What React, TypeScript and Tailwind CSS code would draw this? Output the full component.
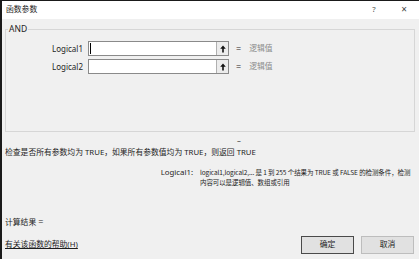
import React from "react";

const FONT = { fontFamily: '"Noto Sans", "Noto Sans CJK SC", sans-serif' };
const CJK = { fontFamily: '"Noto Sans CJK SC", "Noto Sans", sans-serif' };

function UpArrow() {
  return (
    <svg width="6" height="8" viewBox="0 0 6 8">
      <path d="M3 0.5 L5.8 3.8 L3.8 3.8 L3.8 7.5 L2.2 7.5 L2.2 3.8 L0.2 3.8 Z" fill="#111" />
    </svg>
  );
}

function ArgRow({ label, caret }: { label: string; caret?: boolean }) {
  return (
    <div className="flex h-[15px] items-center">
      <div className="w-[77px] shrink-0 text-right text-[8px] leading-[15px]">{label}</div>
      <div className="ml-[5px] flex h-[15px] w-[141px] shrink-0 border border-[#8a8a8a] bg-white">
        <div className="flex flex-1 items-center">
          {caret && <div className="ml-[1px] h-[11px] w-[1px] bg-black" />}
        </div>
        <div className="flex w-[12px] items-center justify-center border-l border-[#b0b0b0] bg-[#ececec]">
          <UpArrow />
        </div>
      </div>
      <div className="ml-[7px] text-[9px] leading-[15px]">=</div>
      <div className="ml-[8px] leading-[15px] text-[#8c8c8c]">逻辑值</div>
    </div>
  );
}

export default function App() {
  return (
    <div
      className="flex h-[259px] w-[419px] flex-col overflow-hidden border-l-2 border-t border-[#1a1a1a] bg-[#f0f0f0] text-[7.8px] text-[#1e1e1e]"
      style={FONT}
    >
      <div className="flex h-[18px] shrink-0 items-center bg-white pl-[4px]">
        <span>函数参数</span>
        <div className="ml-auto flex">
          <div className="flex w-[30px] justify-center text-[#555]">?</div>
          <div className="flex w-[30px] justify-center text-[10px] leading-[10px] text-[#444]">×</div>
        </div>
      </div>
      <div className="flex flex-1 flex-col px-[3px]">
        <div className="relative mr-[1px] mt-[10px] h-[103px] border border-[#d6d6d6]">
          <div className="absolute left-[2px] top-[-6px] bg-[#f0f0f0] px-[1px] text-[8.5px] leading-[10px]">AND</div>
          <div className="flex flex-col gap-[3px] pt-[11px]">
            <ArgRow label="Logical1" caret />
            <ArgRow label="Logical2" />
          </div>
        </div>
        <div className="mt-[3px] h-[10px] pl-[232px] leading-[10px]">–</div>
        <div className="mt-[2px] h-[10px] whitespace-nowrap leading-[10px]">
          检查是否所有参数均为 TRUE，如果所有参数值均为 TRUE，则返回 TRUE
        </div>
        <div className="mt-[10px] flex">
          <div className="w-[188px] shrink-0 text-right leading-[10px]">Logical1:</div>
          <div
            className="ml-[7px] min-w-0 flex-1 whitespace-nowrap text-[6.5px] leading-[10px] tracking-[-0.1px]"
            style={CJK}
          >
            logical1,logical2,... 是 1 到 255 个结果为 TRUE 或 FALSE 的检测条件，检测
            <br />
            内容可以是逻辑值、数组或引用
          </div>
        </div>
        <div className="mt-[30px] h-[10px] leading-[10px]">
          计算结果 <span className="text-[9px]">=</span>
        </div>
        <div className="mt-[9px] flex h-[18px] items-center justify-between pr-[2px]">
          <span className="underline">有关该函数的帮助(H)</span>
          <div className="flex gap-[7px]">
            <div className="flex h-[18px] w-[53px] items-center justify-center border border-[#4a4a4a] bg-[#e1e1e1]">
              确定
            </div>
            <div className="flex h-[18px] w-[53px] items-center justify-center border border-[#bdbdbd] bg-[#e1e1e1]">
              取消
            </div>
          </div>
        </div>
      </div>
    </div>
  );
}
